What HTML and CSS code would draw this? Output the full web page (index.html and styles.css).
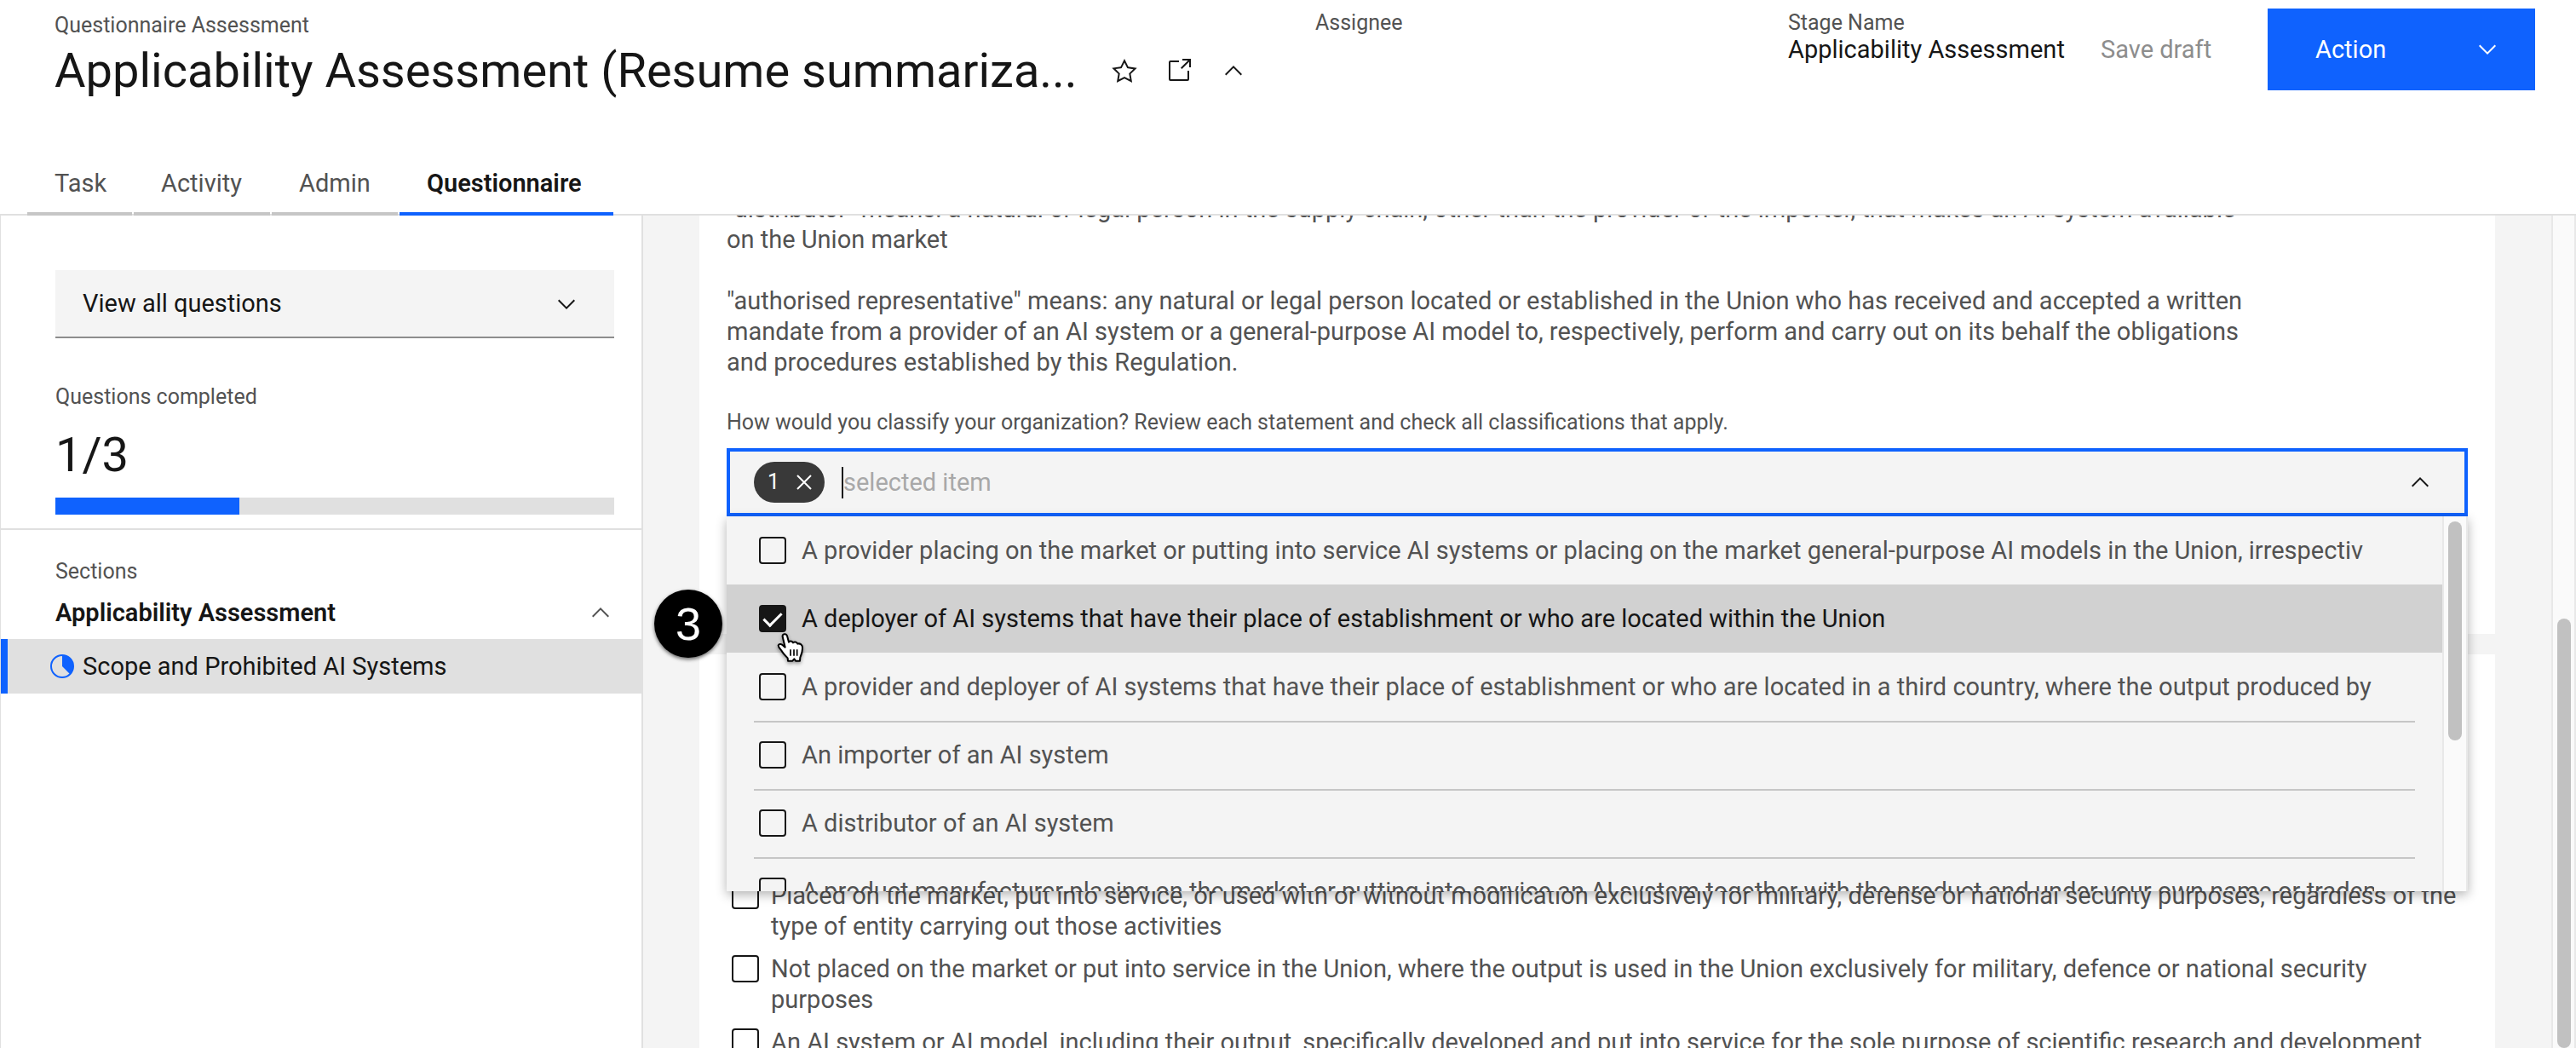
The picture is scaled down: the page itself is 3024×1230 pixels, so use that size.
FILE: index.html
```html
<!DOCTYPE html>
<html lang="en">
<head>
<meta charset="utf-8">
<meta name="viewport" content="width=device-width, initial-scale=1">
<title>Applicability Assessment</title>
<link rel="stylesheet" href="styles.css">
</head>
<body>
<svg class="sprite" aria-hidden="true">
  <symbol id="chevron-up" viewBox="0 0 32 32"><path d="M16 10 26 20 24.6 21.4 16 12.8 7.4 21.4 6 20Z"/></symbol>
  <symbol id="chevron-down" viewBox="0 0 32 32"><path d="M16 22 6 12 7.4 10.6 16 19.2 24.6 10.6 26 12Z"/></symbol>
</svg>

<header class="header">
  <div class="summary">
    <div class="identity">
      <p class="caption">Questionnaire Assessment</p>
      <div class="title-row">
        <h1 class="title">Applicability Assessment (Resume summariza...</h1>
        <button class="icon-button" aria-label="Favorite">
          <svg class="icon" viewBox="0 0 32 32"><path d="M16,6.52l2.76,5.58.46,1,1,.15,6.16.89L22,18.44l-.75.73.18,1,1.05,6.13-5.51-2.89L16,23l-.93.49L9.56,26.34l1-6.13.18-1L10,18.44,5.58,14.09l6.16-.89,1-.15.46-1L16,6.52M16,2l-4.55,9.22L1.28,12.69l7.36,7.18L6.9,30,16,25.22,25.1,30,23.36,19.87l7.36-7.18L20.55,11.22Z"/></svg>
        </button>
        <button class="icon-button" aria-label="Open in new tab">
          <svg class="icon" viewBox="0 0 32 32"><path d="M26,28H6a2,2,0,0,1-2-2V6A2,2,0,0,1,6,4H16V6H6V26H26V16h2V26A2,2,0,0,1,26,28Z"/><path d="M20 2V4H26.586L18 12.586 19.414 14 28 5.414V12H30V2Z"/></svg>
        </button>
        <button class="icon-button" aria-label="Collapse header">
          <svg class="icon"><use href="#chevron-up"/></svg>
        </button>
      </div>
    </div>
    <dl class="field">
      <dt class="caption">Assignee</dt>
      <dd class="field-value"></dd>
    </dl>
    <dl class="field">
      <dt class="caption">Stage Name</dt>
      <dd class="field-value">Applicability Assessment</dd>
    </dl>
    <button class="save-button" disabled>Save draft</button>
    <button class="action-button">Action<svg class="icon"><use href="#chevron-down"/></svg></button>
  </div>
  <nav class="tabs" aria-label="Views">
    <a class="tab" href="#task">Task</a>
    <a class="tab" href="#activity">Activity</a>
    <a class="tab" href="#admin">Admin</a>
    <a class="tab tab-current" href="#questionnaire" aria-current="page">Questionnaire</a>
  </nav>
</header>

<div class="workspace">
  <aside class="sidebar">
    <section class="progress-panel">
      <div class="select-box">
        <select class="select" aria-label="Filter questions"><option>View all questions</option></select>
        <svg class="icon select-icon"><use href="#chevron-down"/></svg>
      </div>
      <p class="caption">Questions completed</p>
      <p class="count">1/3</p>
      <div class="bar" role="progressbar" aria-label="Questions completed" aria-valuemin="0" aria-valuemax="3" aria-valuenow="1"><div class="bar-fill" style="width:33%"></div></div>
    </section>
    <nav class="sections" aria-label="Sections">
      <p class="caption sections-caption">Sections</p>
      <button class="section-toggle" aria-expanded="true">Applicability Assessment<svg class="icon"><use href="#chevron-up"/></svg></button>
      <a class="section-link" href="#scope">
        <svg class="status-icon" viewBox="0 0 28 28" aria-hidden="true"><circle cx="14" cy="14" r="13" fill="none" stroke="currentColor" stroke-width="2"/><path d="M14 1A13 13 0 0 1 23.2 23.2L14 14Z"/></svg>
        Scope and Prohibited AI Systems
      </a>
    </nav>
  </aside>

  <main class="content">
    <div class="cards">
      <section class="card card-roles">
        <p class="text">"distributor" means: a natural or legal person in the supply chain, other than the provider or the importer, that makes an AI system available<br>on the Union market</p>
        <p class="text">"authorised representative" means: any natural or legal person located or established in the Union who has received and accepted a written<br>mandate from a provider of an AI system or a general-purpose AI model to, respectively, perform and carry out on its behalf the obligations<br>and procedures established by this Regulation.</p>
        <label class="caption question" for="roles">How would you classify your organization? Review each statement and check all classifications that apply.</label>
        <div class="combo">
          <div class="combo-field">
            <button class="tag" aria-label="Clear 1 selected item">1<svg class="tag-icon" viewBox="0 0 18 18"><path d="M1 1 17 17M17 1 1 17" stroke="currentColor" stroke-width="2" fill="none"/></svg></button>
            <span class="caret"></span>
            <input class="combo-input" id="roles" type="text" placeholder="selected item">
            <svg class="icon"><use href="#chevron-up"/></svg>
          </div>
          <div class="menu">
            <div class="options">
              <label class="option"><input class="check" type="checkbox"><span class="option-text">A provider placing on the market or putting into service AI systems or placing on the market general-purpose AI models in the Union, irrespectiv</span></label>
              <label class="option option-active"><input class="check" type="checkbox" checked><span class="option-text">A deployer of AI systems that have their place of establishment or who are located within the Union</span></label>
              <label class="option"><input class="check" type="checkbox"><span class="option-text">A provider and deployer of AI systems that have their place of establishment or who are located in a third country, where the output produced by</span></label>
              <label class="option option-ruled"><input class="check" type="checkbox"><span class="option-text">An importer of an AI system</span></label>
              <label class="option option-ruled"><input class="check" type="checkbox"><span class="option-text">A distributor of an AI system</span></label>
              <label class="option option-ruled"><input class="check" type="checkbox"><span class="option-text">A product manufacturer placing on the market or putting into service an AI system together with the product and under your own name or trademark</span></label>
            </div>
            <div class="scrollbar menu-scrollbar"><div class="thumb menu-thumb"></div></div>
          </div>
          <div class="step-badge">3</div>
          <svg class="pointer" viewBox="0 0 96 108" aria-hidden="true">
            <path d="M20 13C18 2 33 0 36 10L42 32C45 26 54 28 57 34C61 29 70 31 73 38C80 35 90 41 90 50C91 66 86 76 82 86L81 98H66L61 91L55 98H39L38 88C30 80 22 72 17 63C13 56 4 50 5 43C8 36 18 39 22 44L29 50Z" fill="#fff" stroke="#000" stroke-width="6" stroke-linejoin="round"/>
            <path d="M48 58V80M60 58V80M71 58V80" stroke="#000" stroke-width="5"/>
          </svg>
        </div>
      </section>
      <section class="card card-exclusions">
        <label class="exclusion"><input class="check" type="checkbox"><span>Placed on the market, put into service, or used with or without modification exclusively for military, defense or national security purposes, regardless of the<br>type of entity carrying out those activities</span></label>
        <label class="exclusion"><input class="check" type="checkbox"><span>Not placed on the market or put into service in the Union, where the output is used in the Union exclusively for military, defence or national security<br>purposes</span></label>
        <label class="exclusion"><input class="check" type="checkbox"><span>An AI system or AI model, including their output, specifically developed and put into service for the sole purpose of scientific research and development</span></label>
      </section>
    </div>
  </main>
  <div class="scrollbar page-scrollbar"><div class="thumb page-thumb"></div></div>
</div>
</body>
</html>
```
FILE: styles.css
```css
* { box-sizing: border-box; }

body {
  margin: 0;
  height: 100vh;
  display: flex;
  flex-direction: column;
  overflow: hidden;
  background: #fff;
  color: #161616;
  font: 29px/36px Roboto, "Open Sans", sans-serif;
}

h1, p, dl, dd { margin: 0; }

button, input, select {
  margin: 0;
  padding: 0;
  border: 0;
  background: none;
  color: inherit;
  font: inherit;
}

a { color: inherit; text-decoration: none; }

.sprite { display: none; }

.icon {
  flex: none;
  display: block;
  width: 32px;
  height: 32px;
  fill: currentColor;
}

.caption {
  color: #525252;
  font-size: 25px;
  line-height: 34px;
}

/* Header */
.header {
  flex: none;
  border-bottom: 2px solid #e0e0e0;
}

.summary {
  display: grid;
  grid-template-columns: minmax(0, 1fr) 555px 367px 196px 314px;
  align-items: start;
  padding: 10px 48px 0 64px;
}

.identity { padding-top: 3px; }

.title-row {
  display: flex;
  align-items: center;
  gap: 32px;
}

.title {
  flex: none;
  width: 1208px;
  overflow: hidden;
  font-size: 56px;
  font-weight: 400;
  line-height: 72px;
  white-space: nowrap;
}

.field-value { line-height: 28px; }

.save-button {
  height: 96px;
  color: #8d8d8d;
  text-align: left;
}

.action-button {
  display: flex;
  align-items: center;
  justify-content: space-between;
  height: 96px;
  padding: 0 40px 0 56px;
  background: #0f62fe;
  color: #fff;
}

.tabs {
  display: grid;
  grid-template-columns: 123px 160px 148px 251px;
  gap: 2px;
  margin: 62px 0 -2px 32px;
}

.tab {
  height: 72px;
  padding-left: 32px;
  border-bottom: 4px solid #c6c6c6;
  color: #525252;
  line-height: 68px;
}

.tab-current {
  border-color: #0f62fe;
  color: #161616;
  font-weight: 600;
}

/* Sidebar */
.workspace {
  flex: 1;
  min-height: 0;
  display: flex;
  background: #f4f4f4;
}

.sidebar {
  flex: none;
  width: 755px;
  border-left: 1px solid #e0e0e0;
  border-right: 2px solid #e0e0e0;
  background: #fff;
}

.progress-panel {
  padding: 64px 32px 16px 64px;
  border-bottom: 2px solid #e0e0e0;
}

.select-box {
  display: grid;
  align-items: center;
  margin-bottom: 52px;
}

.select {
  grid-area: 1 / 1;
  height: 80px;
  padding-left: 32px;
  border-bottom: 2px solid #8d8d8d;
  border-radius: 0;
  background: #f4f4f4;
  appearance: none;
}

.select-icon {
  grid-area: 1 / 1;
  justify-self: end;
  margin-right: 40px;
  pointer-events: none;
}

.count {
  margin: 16px 0 14px;
  font-size: 56px;
  line-height: 71px;
}

.bar {
  height: 20px;
  background: #e0e0e0;
}

.bar-fill {
  height: 100%;
  background: #0f62fe;
}

.sections-caption { padding: 32px 0 0 64px; }

.section-toggle {
  display: flex;
  align-items: center;
  justify-content: space-between;
  width: 100%;
  height: 62px;
  padding: 0 32px 0 64px;
  font-weight: 600;
}

.section-toggle .icon { color: #525252; }

.section-link {
  display: flex;
  align-items: center;
  gap: 10px;
  height: 64px;
  padding-left: 50px;
  border-left: 8px solid #0f62fe;
  background: #e0e0e0;
}

.status-icon {
  width: 28px;
  height: 28px;
  color: #0f62fe;
  fill: currentColor;
}

/* Questionnaire */
.content {
  flex: 1;
  min-width: 0;
  overflow: hidden;
  padding: 0 66px;
}

.cards {
  display: flex;
  flex-direction: column;
  gap: 24px;
  margin-top: -26px;
}

.card {
  padding: 0 32px;
  background: #fff;
  color: #525252;
}

.card-roles { padding-bottom: 138px; }

.text {
  margin-bottom: 36px;
  white-space: nowrap;
}

.question {
  display: block;
  margin-bottom: 13px;
}

.combo { position: relative; }

.combo-field {
  display: flex;
  align-items: center;
  height: 80px;
  padding: 0 36px 0 28px;
  border: 4px solid #0f62fe;
  background: #f4f4f4;
  color: #161616;
}

.tag {
  display: flex;
  align-items: center;
  justify-content: space-between;
  width: 83px;
  height: 48px;
  padding: 0 15px 0 16px;
  border-radius: 24px;
  background: #393939;
  color: #fff;
  font-size: 25px;
}

.tag-icon { width: 18px; height: 18px; }

.caret {
  width: 2px;
  height: 37px;
  margin-left: 20px;
  background: #161616;
}

.combo-input {
  flex: 1;
  min-width: 0;
  outline: 0;
}

.combo-input::placeholder { color: #a8a8a8; opacity: 1; }

.menu {
  position: absolute;
  z-index: 1;
  top: 100%;
  left: 0;
  right: 0;
  display: flex;
  height: 440px;
  overflow: hidden;
  background: #f4f4f4;
}

.combo::after {
  content: "";
  position: absolute;
  top: 100%;
  left: 0;
  right: 0;
  height: 440px;
  box-shadow: 0 4px 12px rgba(0, 0, 0, 0.3);
}

.options { flex: 1; min-width: 0; }

.option {
  position: relative;
  display: flex;
  align-items: center;
  gap: 18px;
  height: 80px;
  padding: 0 80px 0 38px;
}

.option-active { background: #d1d1d1; color: #161616; }

.option-ruled::before {
  content: "";
  position: absolute;
  top: 0;
  left: 32px;
  right: 32px;
  height: 2px;
  background: #c6c6c6;
}

.option-text {
  flex: 1;
  min-width: 0;
  overflow: hidden;
  white-space: nowrap;
}

.check {
  flex: none;
  display: grid;
  place-items: center;
  width: 32px;
  height: 32px;
  border: 2px solid #161616;
  border-radius: 4px;
  appearance: none;
}

.check:checked { background: #161616; }

.check:checked::after {
  content: "";
  width: 9px;
  height: 18px;
  margin-bottom: 4px;
  border: solid #fff;
  border-width: 0 3px 3px 0;
  transform: rotate(45deg);
}

.card-exclusions {
  display: flex;
  flex-direction: column;
  gap: 14px;
  padding: 265px 0 0 38px;
}

.exclusion {
  display: flex;
  gap: 14px;
  white-space: nowrap;
}

.exclusion .check { margin-top: 2px; }

/* Scrollbars */
.scrollbar {
  flex: none;
  border: solid #e8e8e8;
  border-width: 0 2px;
  background: #fafafa;
}

.thumb {
  width: 16px;
  margin: 0 auto;
  border-radius: 8px;
  background: #c1c1c1;
}

.menu-scrollbar { width: 30px; padding-top: 6px; }
.menu-thumb { height: 257px; }
.page-scrollbar { width: 29px; padding-top: 473px; }
.page-thumb { height: 100%; }

/* Walkthrough overlay */
.step-badge {
  position: absolute;
  z-index: 2;
  top: 166px;
  left: -85px;
  width: 80px;
  height: 80px;
  border-radius: 50%;
  background: #000;
  box-shadow: 0 2px 4px rgba(0, 0, 0, 0.6);
  color: #fff;
  font: 54px/80px "Liberation Sans", sans-serif;
  text-align: center;
}

.pointer {
  position: absolute;
  z-index: 2;
  top: 217px;
  left: 59px;
  width: 32px;
  height: 36px;
  filter: drop-shadow(0 2px 2px rgba(0, 0, 0, 0.4));
}
```
